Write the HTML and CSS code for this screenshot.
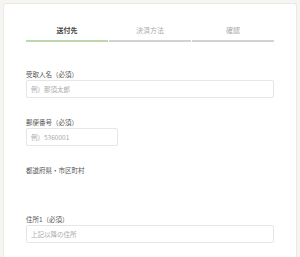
FILE: index.html
```html
<!DOCTYPE html>
<html lang="ja">
<head>
	<meta charset="utf-8">
	<title>お届け先の入力</title>
	<link rel="stylesheet" href="styles.css">
</head>
<body>
	<div class="card">
		<div class="steps">
			<div class="step on">送付先</div>
			<div class="step">決済方法</div>
			<div class="step">確認</div>
		</div>
		<div class="field">
			<label for="nm">受取人名（必須）</label>
			<input type="text" id="nm" placeholder="例）那須太郎">
		</div>
		<div class="field">
			<label for="zp">郵便番号（必須）</label>
			<input type="text" id="zp" class="short" placeholder="例）5360001">
		</div>
		<div class="field pref">
			<label>都道府県・市区町村</label>
		</div>
		<div class="field">
			<label for="ad1">住所1（必須）</label>
			<input type="text" id="ad1" placeholder="上記以降の住所">
		</div>
	</div>
</body>
</html>
```

FILE: styles.css
```css
html,body{height: 100%}
body{margin: 0;padding: 3px 3px 0;box-sizing: border-box;background: #f6f5f2;font-family: "Noto Sans CJK JP", "Noto Sans", sans-serif;color: #555;overflow: hidden}
.card{box-sizing: border-box;height: 100%;background: #fff;border: 1px solid #ebe9e4;border-bottom: none;border-radius: 3px 3px 0 0;padding: 21px 22px 0;}
.steps{display: grid;grid-template-columns: repeat(3, 1fr);gap: 1px;margin-bottom: 27px}
.step{font-size: 7px;line-height: 10px;text-align: center;color: #aaa;padding-bottom: 5px;border-bottom: 2px solid #d2d2d2}
.step.on{color: #444;font-weight: bold;border-bottom-color: #bcd9ae}
.field{display: flex;flex-direction: column;margin-bottom: 19px}
.field label{font-size: 6.5px;line-height: 10px;margin-bottom: 1px;color: #555}
.pref{margin-bottom: 38px}
input{box-sizing: border-box;height: 18px;width: 100%;border: 1px solid #e6e6e6;border-radius: 2px;padding: 0 4px;font-size: 6.5px;font-family: inherit;color: #555;outline: none}
input::placeholder{color: #aaa}
input.short{width: 92px}
```
